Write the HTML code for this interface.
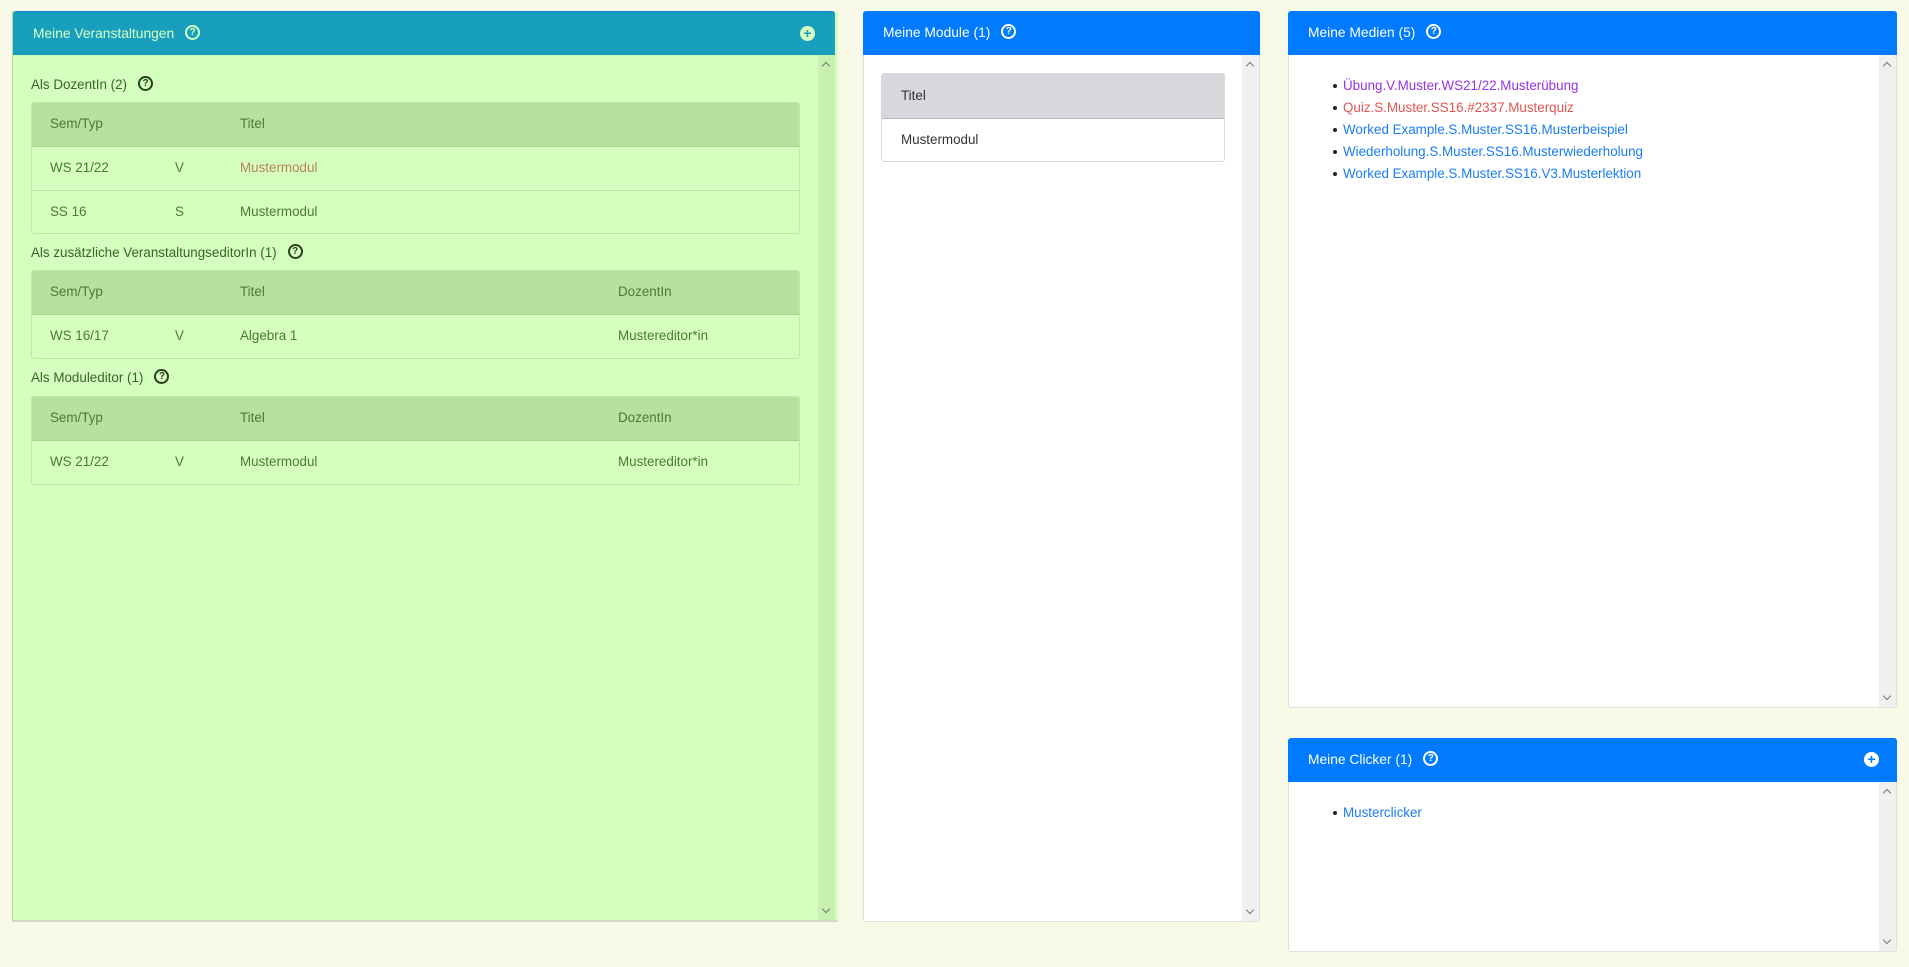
<!DOCTYPE html>
<html><head><meta charset="utf-8"><style>
*{box-sizing:border-box;margin:0;padding:0}
body{width:1909px;height:967px;background:#f8f9e6;font-family:"Liberation Sans",sans-serif;font-size:13.4px;position:relative;overflow:hidden}
.abs{position:absolute}
.hdr{position:absolute;left:0;right:0;top:0;height:44px;color:#fff;padding-left:20px;line-height:44px;font-size:13.8px;border-radius:3px 3px 0 0}
.q{display:inline-block;width:15px;height:15px;border:2px solid currentColor;border-radius:50%;font-size:10px;line-height:11px;text-align:center;font-weight:bold;vertical-align:middle;margin-left:11px;margin-top:-3px}
.plus{position:absolute;width:15px;height:15px;border-radius:50%;font-weight:bold;font-size:14px;line-height:15px;text-align:center}
.sb{position:absolute;right:0;width:17px;top:44px;bottom:0}
.sb:before{content:"";position:absolute;left:5px;top:8px;width:5px;height:5px;border-left:1.5px solid #777;border-top:1.5px solid #777;transform:rotate(45deg)}
.sb:after{content:"";position:absolute;left:5px;bottom:8px;width:5px;height:5px;border-right:1.5px solid #777;border-bottom:1.5px solid #777;transform:rotate(45deg)}
.g{color:#4b7a35}
.tbl{position:absolute;left:31px;width:769px;border:1px solid #c2e6a8;border-radius:3px;overflow:hidden}
.tbl .r{position:relative;height:43px;border-top:1px solid #bde0a4;line-height:42px}
.tbl .r.h{background:#b8e0a0;border-top:none;height:44px;border-bottom:1px solid #a8d090}
.tbl .r.h + .r{border-top:none}
.tbl span{position:absolute}
.lbl{position:absolute;left:31px;color:#3f5f2a}
ul{list-style:none}
li{position:relative;height:22px;line-height:22px}
li:before{content:"";position:absolute;left:-10px;top:9px;width:4px;height:4px;border-radius:50%;background:#222}
</style></head><body>

<div class="abs" style="left:12px;top:11px;width:826px;height:911px;background:#d5ffbe;border-left:1px solid #b5dc9c;border-bottom:2px solid #d0d8c8;">
 <div class="hdr" style="background:#189fbe;color:#d8ffc0;right:3px;border-top:1px solid #1a7fd0">Meine Veranstaltungen<span class="q">?</span>
  <span class="plus" style="right:20px;top:14px;background:#d8ffc0;color:#189fbe">+</span></div>
 <div class="sb" style="background:#c8f0b0;right:3px"></div>
</div>

<div class="lbl" style="top:77px">Als DozentIn (2)<span class="q" style="color:#2c3f1c">?</span></div>
<div class="tbl g" style="top:102px">
 <div class="r h"><span style="left:18px">Sem/Typ</span><span style="left:208px">Titel</span></div>
 <div class="r"><span style="left:18px">WS 21/22</span><span style="left:143px">V</span><span style="left:208px;color:#b9805a">Mustermodul</span></div>
 <div class="r"><span style="left:18px">SS 16</span><span style="left:143px">S</span><span style="left:208px">Mustermodul</span></div>
</div>

<div class="lbl" style="top:245px">Als zusätzliche VeranstaltungseditorIn (1)<span class="q" style="color:#2c3f1c">?</span></div>
<div class="tbl g" style="top:270px">
 <div class="r h"><span style="left:18px">Sem/Typ</span><span style="left:208px">Titel</span><span style="left:586px">DozentIn</span></div>
 <div class="r"><span style="left:18px">WS 16/17</span><span style="left:143px">V</span><span style="left:208px">Algebra 1</span><span style="left:586px">Mustereditor*in</span></div>
</div>

<div class="lbl" style="top:370px">Als Moduleditor (1)<span class="q" style="color:#2c3f1c">?</span></div>
<div class="tbl g" style="top:396px">
 <div class="r h"><span style="left:18px">Sem/Typ</span><span style="left:208px">Titel</span><span style="left:586px">DozentIn</span></div>
 <div class="r"><span style="left:18px">WS 21/22</span><span style="left:143px">V</span><span style="left:208px">Mustermodul</span><span style="left:586px">Mustereditor*in</span></div>
</div>

<div class="abs" style="left:863px;top:11px;width:397px;height:911px;background:#fff;border:1px solid #e0e0d8;border-radius:3px">
 <div class="hdr" style="background:#007bff;left:-1px;right:-1px;top:-1px">Meine Module (1)<span class="q">?</span></div>
 <div class="sb" style="background:#f0f0f0;top:43px"></div>
 <div class="abs" style="left:17px;top:61px;width:344px;height:89px;border:1px solid #d8d8dc;border-radius:3px;overflow:hidden;color:#333">
  <div style="height:45px;background:#d6d8dc;border-bottom:1px solid #b8b8be;line-height:44px;padding-left:19px">Titel</div>
  <div style="line-height:42px;padding-left:19px">Mustermodul</div>
 </div>
</div>

<div class="abs" style="left:1288px;top:11px;width:609px;height:697px;background:#fff;border:1px solid #e0e0d8;border-radius:3px">
 <div class="hdr" style="background:#007bff;left:-1px;right:-1px;top:-1px">Meine Medien (5)<span class="q">?</span></div>
 <div class="sb" style="background:#f0f0f0;top:43px"></div>
 <ul class="abs" style="left:54px;top:63px">
  <li style="color:#9433e8">Übung.V.Muster.WS21/22.Musterübung</li>
  <li style="color:#e05550">Quiz.S.Muster.SS16.#2337.Musterquiz</li>
  <li style="color:#1a7cf5">Worked Example.S.Muster.SS16.Musterbeispiel</li>
  <li style="color:#1a7cf5">Wiederholung.S.Muster.SS16.Musterwiederholung</li>
  <li style="color:#1a7cf5">Worked Example.S.Muster.SS16.V3.Musterlektion</li>
 </ul>
</div>

<div class="abs" style="left:1288px;top:738px;width:609px;height:214px;background:#fff;border:1px solid #e0e0d8;border-radius:3px">
 <div class="hdr" style="background:#007bff;left:-1px;right:-1px;top:-1px">Meine Clicker (1)<span class="q">?</span>
  <span class="plus" style="right:18px;top:14px;background:#fff;color:#007bff">+</span></div>
 <div class="sb" style="background:#f0f0f0;top:43px"></div>
 <ul class="abs" style="left:54px;top:63px"><li style="color:#1a7cf5">Musterclicker</li></ul>
</div>
</body></html>
